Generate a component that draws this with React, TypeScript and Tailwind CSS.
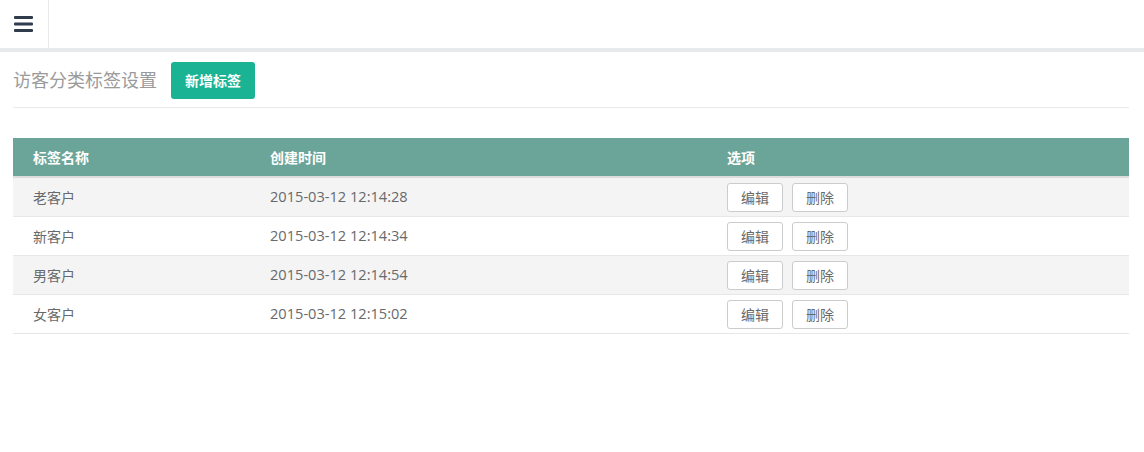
import React from "react";

const rows = [
  { name: "老客户", time: "2015-03-12 12:14:28" },
  { name: "新客户", time: "2015-03-12 12:14:34" },
  { name: "男客户", time: "2015-03-12 12:14:54" },
  { name: "女客户", time: "2015-03-12 12:15:02" },
];

function Bars() {
  return (
    <svg width="20" height="16" viewBox="0 0 20 16">
      <rect x="0" y="0" width="19" height="3" rx="1" fill="#2f3a4c" />
      <rect x="0" y="6.5" width="19" height="3" rx="1" fill="#2f3a4c" />
      <rect x="0" y="13" width="19" height="3" rx="1" fill="#2f3a4c" />
    </svg>
  );
}

export default function App() {
  return (
    <div className="w-[1144px] h-[452px] bg-white font-['Open_Sans','Noto_Sans_CJK_SC',sans-serif] text-[#676a6c]">
      <div className="flex h-[48px] border-b-4 border-[#e7eaec] box-content">
        <div className="w-[49px] border-r border-[#e7eaec] flex items-center pl-[14px]">
          <Bars />
        </div>
      </div>

      <div className="pl-[13px] pr-[15px]">
        <div className="flex items-center h-[56px] border-b border-[#e7eaec] pt-[1px]">
          <h2 className="text-[18px] text-[#9a9a9a] font-normal">访客分类标签设置</h2>
          <button className="ml-[14px] w-[84px] h-[37px] rounded-[3px] bg-[#1ab394] text-white text-[14px] font-bold">
            新增标签
          </button>
        </div>

        <div className="mt-[30px] text-[14px]">
          <div className="grid grid-cols-[237px_457px_1fr] h-[40px] bg-[#6ba599] border-b-2 border-[#dddddd] text-white font-semibold items-center">
            <div className="pl-[20px]">标签名称</div>
            <div className="pl-[20px]">创建时间</div>
            <div className="pl-[20px]">选项</div>
          </div>
          {rows.map((r, i) => (
            <div
              key={r.name}
              className={`grid grid-cols-[237px_457px_1fr] h-[39px] border-b border-[#e7e7e7] items-center ${
                i % 2 === 0 ? "bg-[#f4f4f4]" : "bg-white"
              }`}
            >
              <div className="pl-[20px]">{r.name}</div>
              <div className="pl-[20px] text-[14.6px]">{r.time}</div>
              <div className="pl-[20px] flex gap-[9px]">
                <button className="w-[56px] h-[29px] border border-[#cccccc] rounded-[3px] bg-white text-[14px] text-[#676a6c]">
                  编辑
                </button>
                <button className="w-[56px] h-[29px] border border-[#cccccc] rounded-[3px] bg-white text-[14px] text-[#676a6c]">
                  删除
                </button>
              </div>
            </div>
          ))}
        </div>
      </div>
    </div>
  );
}
